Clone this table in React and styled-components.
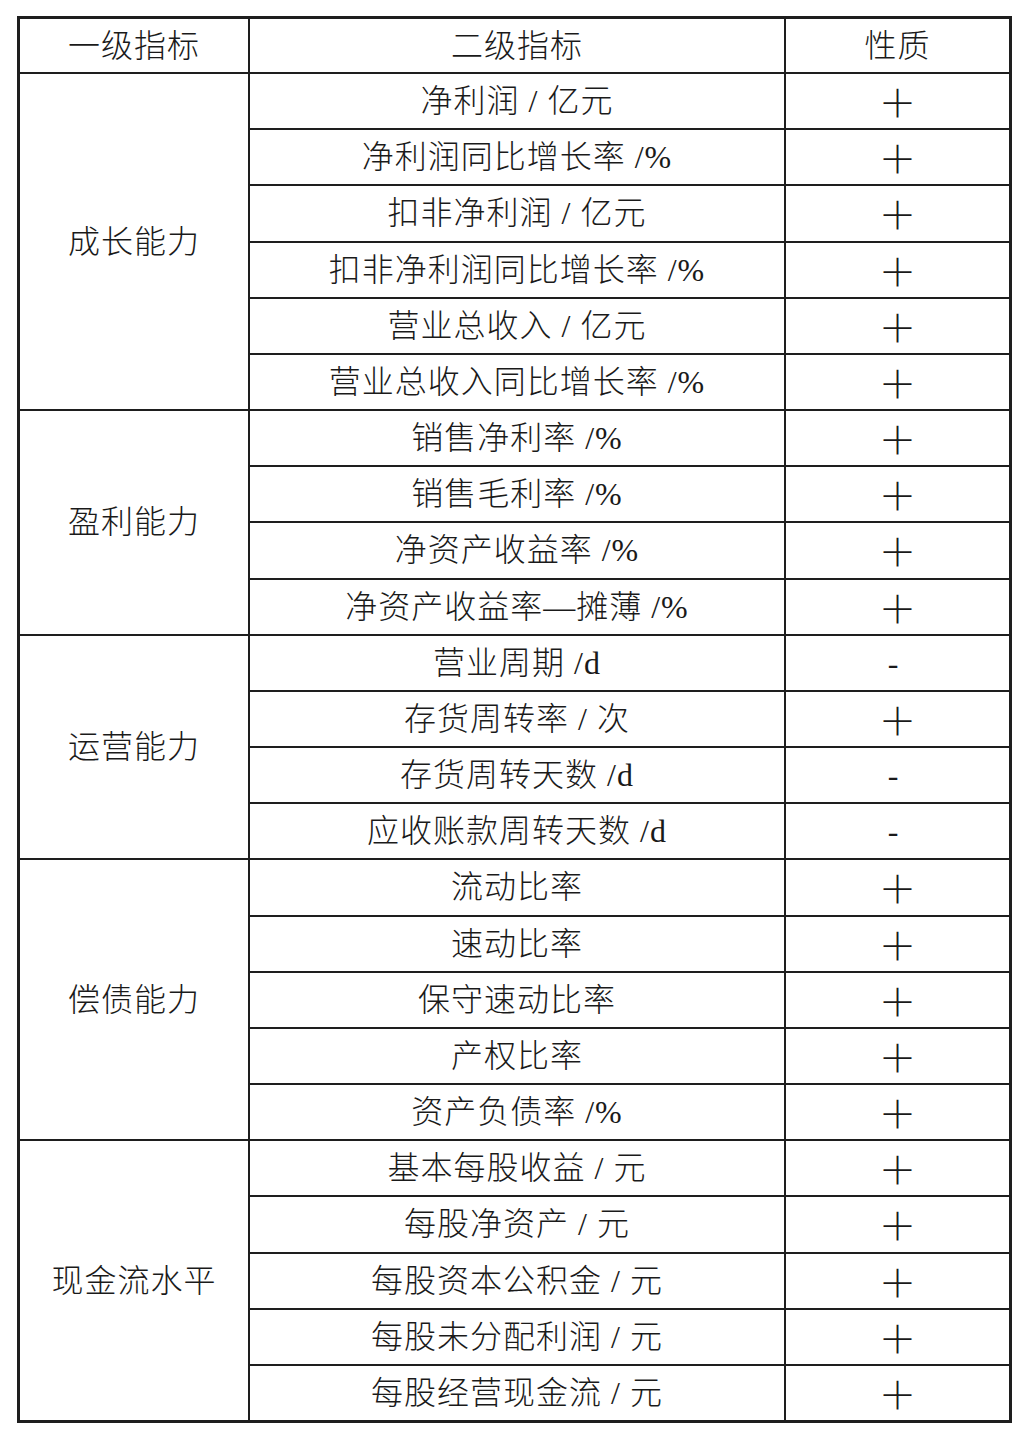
import React from 'react';
import styled, { createGlobalStyle } from 'styled-components';

const GlobalStyle = createGlobalStyle`
    body {
        margin: 0;
        background: #FFFFFF;
    }
`;

const groups = [
    {
        name: '成长能力',
        items: [
            ['净利润 / 亿元', '+'],
            ['净利润同比增长率 /%', '+'],
            ['扣非净利润 / 亿元', '+'],
            ['扣非净利润同比增长率 /%', '+'],
            ['营业总收入 / 亿元', '+'],
            ['营业总收入同比增长率 /%', '+'],
        ],
    },
    {
        name: '盈利能力',
        items: [
            ['销售净利率 /%', '+'],
            ['销售毛利率 /%', '+'],
            ['净资产收益率 /%', '+'],
            ['净资产收益率—摊薄 /%', '+'],
        ],
    },
    {
        name: '运营能力',
        items: [
            ['营业周期 /d', '-'],
            ['存货周转率 / 次', '+'],
            ['存货周转天数 /d', '-'],
            ['应收账款周转天数 /d', '-'],
        ],
    },
    {
        name: '偿债能力',
        items: [
            ['流动比率', '+'],
            ['速动比率', '+'],
            ['保守速动比率', '+'],
            ['产权比率', '+'],
            ['资产负债率 /%', '+'],
        ],
    },
    {
        name: '现金流水平',
        items: [
            ['基本每股收益 / 元', '+'],
            ['每股净资产 / 元', '+'],
            ['每股资本公积金 / 元', '+'],
            ['每股未分配利润 / 元', '+'],
            ['每股经营现金流 / 元', '+'],
        ],
    },
];

const App = () => {
    let row = 2;
    return (
        <>
            <GlobalStyle />
            <Page>
                <Grid>
                    <Cell>一级指标</Cell>
                    <Cell>二级指标</Cell>
                    <Cell>性质</Cell>
                    {groups.map(group => {
                        const start = row;
                        row += group.items.length;
                        return (
                            <React.Fragment key={group.name}>
                                <Cell $row={start} $span={group.items.length} $col={1}>
                                    {group.name}
                                </Cell>
                                {group.items.map(([label, sign], i) => (
                                    <React.Fragment key={label}>
                                        <Cell $row={start + i} $col={2}>{label}</Cell>
                                        <Cell $row={start + i} $col={3}>
                                            {sign === '+' ? <Plus>＋</Plus> : <Minus>-</Minus>}
                                        </Cell>
                                    </React.Fragment>
                                ))}
                            </React.Fragment>
                        );
                    })}
                </Grid>
            </Page>
        </>
    );
}

const Page = styled.div`
    padding: 16px 0 20px 17px;
`;

const Grid = styled.div`
    box-sizing: border-box;
    width: 995px;
    height: 1407px;
    display: grid;
    grid-template-columns: 230px 536px 1fr;
    grid-template-rows: 55px repeat(24, 1fr);
    border-style: solid;
    border-color: #1E1E1E;
    border-width: 3px 1px 1px 3px;
`;

const Cell = styled.div`
    grid-row: ${props => props.$row ? `${props.$row} / span ${props.$span || 1}` : 'auto'};
    grid-column: ${props => props.$col || 'auto'};
    display: flex;
    align-items: center;
    justify-content: center;
    border-right: 2px solid #1E1E1E;
    border-bottom: 2px solid #1E1E1E;
    font-family: "Liberation Serif", "Noto Sans CJK SC", serif;
    font-weight: 300;
    font-size: 32px;
    letter-spacing: 1px;
    line-height: 1;
    color: #1A1A1A;
    white-space: nowrap;
`;

const Plus = styled.span`
    font-family: "Noto Sans CJK SC", sans-serif;
    font-weight: 300;
    font-size: 38px;
    letter-spacing: 0;
`;

const Minus = styled.span`
    margin-right: 8px;
`;

export default App;
